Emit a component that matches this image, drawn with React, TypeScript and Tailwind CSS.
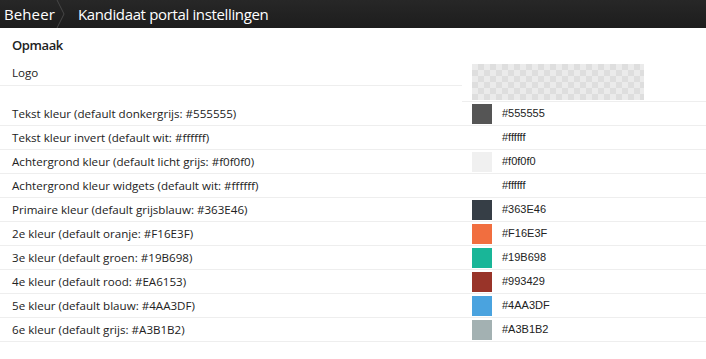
import React from 'react';

interface ColorSetting {
  label: string;
  value: string;
  swatch: string | null;
}

const settings: ColorSetting[] = [
  { label: 'Tekst kleur (default donkergrijs: #555555)', value: '#555555', swatch: 'bg-[#555555]' },
  { label: 'Tekst kleur invert (default wit: #ffffff)', value: '#ffffff', swatch: null },
  { label: 'Achtergrond kleur (default licht grijs: #f0f0f0)', value: '#f0f0f0', swatch: 'bg-[#f0f0f0]' },
  { label: 'Achtergrond kleur widgets (default wit: #ffffff)', value: '#ffffff', swatch: null },
  { label: 'Primaire kleur (default grijsblauw: #363E46)', value: '#363E46', swatch: 'bg-[#363E46]' },
  { label: '2e kleur (default oranje: #F16E3F)', value: '#F16E3F', swatch: 'bg-[#F16E3F]' },
  { label: '3e kleur (default groen: #19B698)', value: '#19B698', swatch: 'bg-[#19B698]' },
  { label: '4e kleur (default rood: #EA6153)', value: '#993429', swatch: 'bg-[#993429]' },
  { label: '5e kleur (default blauw: #4AA3DF)', value: '#4AA3DF', swatch: 'bg-[#4AA3DF]' },
  { label: '6e kleur (default grijs: #A3B1B2)', value: '#A3B1B2', swatch: 'bg-[#A3B1B2]' },
];

const Header: React.FC = () => (
  <div className="flex h-[28px] items-center bg-gradient-to-b from-[#272727] to-[#1d1d1d] text-white font-['Open_Sans',sans-serif]">
    <span className="pl-[4px] text-[15px] tracking-[0.1px]">Beheer</span>
    <svg width="12" height="28" viewBox="0 0 12 28" className="ml-[1px] mr-[10px]">
      <path d="M1 0 L8 14 L1 28" fill="none" stroke="#474747" strokeWidth="1" />
    </svg>
    <span className="text-[15px] tracking-[-0.35px]">Kandidaat portal instellingen</span>
  </div>
);

export default function App() {
  return (
    <div className="w-[706px] h-[359px] overflow-hidden bg-white">
      <Header />
      <div className="px-[12px] pt-[8px] pb-[6px] text-[13px] font-semibold text-[#222] font-['Open_Sans',sans-serif] leading-[18px] tracking-[-0.4px]">
        Opmaak
      </div>

      <div className="flex items-start">
        <div className="w-[462px] h-[26px] flex items-center pl-[12px] border-b border-[#eeeeee] text-[11.6px] text-[#222] font-['Open_Sans',sans-serif]">
          Logo
        </div>
        <div className="flex-1 h-[42px] pl-[10px] pt-[4px] border-b border-[#eeeeee]">
          <div className="w-[172px] h-[36px] bg-[repeating-conic-gradient(#dedede_0%_25%,#ebebeb_0%_50%)] bg-[length:12px_12px]" />
        </div>
      </div>

      {settings.map((s) => (
        <div key={s.label} className="flex h-[24px] items-center border-b border-[#eeeeee]">
          <div className="w-[462px] pl-[12px] text-[11.6px] text-[#222] font-['Open_Sans',sans-serif]">{s.label}</div>
          <div className="flex items-center pl-[10px]">
            <div className={`w-[20px] h-[20px] ${s.swatch ?? ''}`} />
            <span className="ml-[10px] text-[11px] text-[#222] font-['Liberation_Sans',Arial,sans-serif]">{s.value}</span>
          </div>
        </div>
      ))}
    </div>
  );
}
